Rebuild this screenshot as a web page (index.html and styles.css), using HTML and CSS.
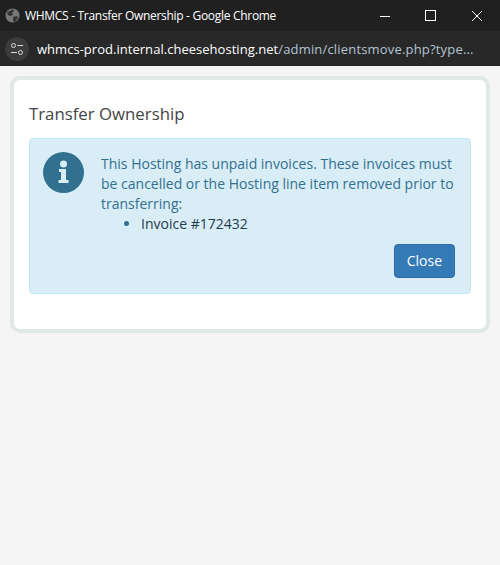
FILE: index.html
```html
<!DOCTYPE html>
<html lang="en">
<head>
  <meta charset="UTF-8">
  <title>WHMCS - Transfer Ownership</title>
  <link rel="stylesheet" href="styles.css">
</head>
<body>

  <div class="titlebar">
    <svg class="globe" width="15" height="15" viewBox="0 0 15 15">
      <circle cx="7.5" cy="7.5" r="7" fill="#787878"/>
      <path d="M2 4 L5 3 L8 1 L9 3 L7 5 L8 7 L5 8 L3 7 Z M8 9 L12 8 L13 10 L10 14 L8 13 Z" fill="#333333"/>
    </svg>
    <span class="window-title">WHMCS - Transfer Ownership - Google Chrome</span>
    <div class="window-controls">
      <svg width="12" height="12" viewBox="0 0 12 12"><path d="M1 6.5H11" stroke="#fff" fill="none"/></svg>
      <svg width="12" height="12" viewBox="0 0 12 12"><rect x="0.5" y="0.5" width="10" height="10" stroke="#fff" fill="none"/></svg>
      <svg width="12" height="12" viewBox="0 0 12 12"><path d="M1 1L11 11M11 1L1 11" stroke="#fff" fill="none"/></svg>
    </div>
  </div>

  <div class="addressbar">
    <div class="site-icon">
      <svg width="14" height="14" viewBox="0 0 14 14">
        <circle cx="3.5" cy="3.5" r="2" stroke="#dcdcdc" fill="none"/>
        <path d="M7.5 3.5H13M1 10.5H7" stroke="#dcdcdc" fill="none"/>
        <circle cx="10.5" cy="10.5" r="2" stroke="#dcdcdc" fill="none"/>
      </svg>
    </div>
    <div class="url"><span class="host">whmcs-prod.internal.cheesehosting.net</span>/admin/clientsmove.php?type...</div>
  </div>

  <div class="page">
    <div class="card">
      <h2 class="card-title">Transfer Ownership</h2>
      <div class="alert">
        <svg class="alert-icon" width="41" height="41" viewBox="0 0 41 41">
          <circle cx="20.5" cy="20.5" r="20.5" fill="#31708f"/>
          <circle cx="20.5" cy="12" r="3.5" fill="#d9edf7"/>
          <path d="M16 17H23V28H25.5V31H15.5V28H18V20H16Z" fill="#d9edf7"/>
        </svg>
        <div class="alert-body">
          <p class="alert-text">This Hosting has unpaid invoices. These invoices must be cancelled or the Hosting line item removed prior to transferring:</p>
          <ul class="invoice-list">
            <li>Invoice #172432</li>
          </ul>
          <div class="alert-actions">
            <button class="btn-close">Close</button>
          </div>
        </div>
      </div>
    </div>
  </div>

</body>
</html>
```

FILE: styles.css
```css
html, body {
  height: 100%;
}
body {
  display: flex;
  flex-direction: column;
  margin: 0;
  background: #f5f5f5;
  font-family: "Open Sans", Arial, sans-serif;
  font-size: 14px;
  line-height: 20px;
  overflow: hidden;
}
.titlebar {
  display: flex;
  align-items: center;
  height: 31px;
  padding-left: 5px;
  background: #202020;
  color: #fff;
  font-size: 12px;
  letter-spacing: -0.3px;
}
.globe {
  margin-right: 5px;
}
.window-title {
  flex: 1;
}
.window-controls {
  display: flex;
  gap: 34px;
  padding-right: 17px;
}
.addressbar {
  display: flex;
  align-items: center;
  height: 35px;
  padding-left: 5px;
  background: #282828;
  color: #b4c4d0;
  font-size: 13px;
  letter-spacing: 0.18px;
}
.site-icon {
  display: flex;
  align-items: center;
  justify-content: center;
  width: 24px;
  height: 24px;
  margin-right: 8px;
  border-radius: 50%;
  background: #3c3c3c;
}
.host {
  color: #fff;
  letter-spacing: 0.03px;
}
.page {
  flex: 1;
  padding: 10px 10px 0;
}
.card {
  box-sizing: border-box;
  height: 257px;
  padding: 24px 15px 0;
  border: 4px solid #e1e8e8;
  border-radius: 10px;
  background: #fff;
}
.card-title {
  margin: 0 0 14px;
  color: #444;
  font-size: 16.8px;
  font-weight: 400;
  line-height: 20px;
}
.alert {
  display: flex;
  box-sizing: border-box;
  height: 156px;
  padding: 13px 15px 15px 13px;
  border: 1px solid #bce8f1;
  border-radius: 4px;
  background: #d9edf7;
  color: #31708f;
}
.alert-icon {
  flex: none;
  margin-right: 17px;
}
.alert-body {
  padding-top: 2px;
}
.alert-text {
  margin: 0;
}
.invoice-list {
  margin: 0 0 10px;
  padding-left: 40px;
}
.invoice-list li {
  color: #1f3a4d;
}
.invoice-list li::marker {
  color: #31708f;
}
.alert-actions {
  display: flex;
  justify-content: flex-end;
}
.btn-close {
  height: 34px;
  padding: 6px 12px;
  border: 1px solid #2e6da4;
  border-radius: 4px;
  background: #337ab7;
  color: #fff;
  font: inherit;
}
```
